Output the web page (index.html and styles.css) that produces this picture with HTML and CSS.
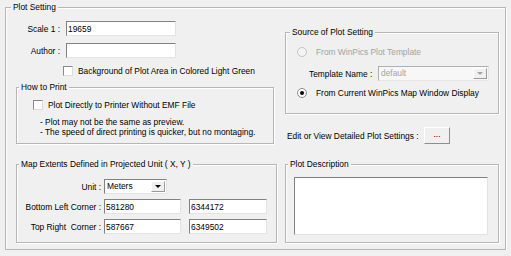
FILE: index.html
```html
<!DOCTYPE html>
<html lang="en">
<head>
    <meta charset="UTF-8">
    <meta name="viewport" content="width=device-width, initial-scale=1.0">
    <title>Plot Setting</title>
    <link rel="stylesheet" href="styles.css">
</head>
<body>
    <fieldset class="group main">
        <legend>Plot Setting</legend>
        <div class="layout">

            <!-- Left column -->
            <div class="col-left">
                <div class="field-row">
                    <label class="lbl" for="scale">Scale 1 :</label>
                    <input class="text wide" id="scale" type="text" value="19659">
                </div>
                <div class="field-row">
                    <label class="lbl" for="author">Author :</label>
                    <input class="text wide" id="author" type="text" value="">
                </div>
                <label class="check-row bg-check">
                    <input type="checkbox" class="check">
                    <span>Background of Plot Area in Colored Light Green</span>
                </label>

                <fieldset class="group print">
                    <legend>How to Print</legend>
                    <label class="check-row">
                        <input type="checkbox" class="check">
                        <span>Plot Directly to Printer Without EMF File</span>
                    </label>
                    <p class="note">- Plot may not be the same as preview.<br>- The speed of direct printing is quicker, but no montaging.</p>
                </fieldset>
            </div>

            <!-- Right column -->
            <div class="col-right">
                <fieldset class="group source">
                    <legend>Source of Plot Setting</legend>
                    <label class="radio-row disabled">
                        <input type="radio" name="source" class="radio" disabled>
                        <span>From WinPics Plot Template</span>
                    </label>
                    <div class="template-row">
                        <span class="tpl-lbl">Template Name :</span>
                        <div class="combo tpl disabled">
                            <span class="val">default</span>
                            <span class="drop"><span class="tri"></span></span>
                        </div>
                    </div>
                    <label class="radio-row">
                        <input type="radio" name="source" class="radio" checked>
                        <span>From Current WinPics Map Window Display</span>
                    </label>
                </fieldset>
                <div class="edit-row">
                    <span class="edit-lbl">Edit or View Detailed Plot Settings :</span>
                    <button class="btn" type="button">...</button>
                </div>
            </div>

            <fieldset class="group extents">
                <legend>Map Extents Defined in Projected Unit ( X, Y )</legend>
                <div class="ext-row">
                    <span class="ext-lbl">Unit :</span>
                    <div class="combo unit">
                        <span class="val">Meters</span>
                        <span class="drop"><span class="tri"></span></span>
                    </div>
                </div>
                <div class="ext-row">
                    <span class="ext-lbl">Bottom Left Corner :</span>
                    <input class="text coord" type="text" value="581280">
                    <input class="text coord" type="text" value="6344172">
                </div>
                <div class="ext-row">
                    <span class="ext-lbl">Top Right&nbsp; Corner :</span>
                    <input class="text coord" type="text" value="587667">
                    <input class="text coord" type="text" value="6349502">
                </div>
            </fieldset>

            <fieldset class="group desc">
                <legend>Plot Description</legend>
                <textarea class="desc-box"></textarea>
            </fieldset>

        </div>
    </fieldset>
</body>
</html>
```

FILE: styles.css
```css
/* General */
body {
    margin: 0;
    background-color: #f0f0f0;
    font-family: "Liberation Sans", Arial, sans-serif;
    font-size: 8.4px;
    line-height: 10px;
    color: #000;
}

/* Group boxes (etched look) */
.group {
    margin: 0;
    min-inline-size: 0;
    border: 1px solid #b6b6b6;
    box-shadow: 1px 1px 0 #fff, inset 1px 1px 0 #fff;
}

.group > legend {
    padding: 0 2px;
    line-height: 10px;
    background-color: #f0f0f0;
}

.main {
    width: 501px;
    box-sizing: border-box;
    margin: 2px 0 0 5px;
    padding: 9px 6px 6px 10px;
}

.main > legend {
    margin-left: -5px;
}

.layout {
    display: grid;
    grid-template-columns: 261px 214px;
    column-gap: 8px;
    row-gap: 15px;
}

/* Inputs */
.text {
    box-sizing: border-box;
    height: 15px;
    margin: 0;
    padding: 0 1px;
    border: 1px solid;
    border-color: #828282 #e3e3e3 #e3e3e3 #828282;
    background-color: #fff;
    font: inherit;
    color: #000;
    outline: none;
}

.check,
.radio {
    appearance: none;
    box-sizing: border-box;
    margin: 0;
    background-color: #fff;
}

.check {
    width: 10px;
    height: 10px;
    margin-right: 5px;
    border: 1px solid;
    border-color: #8a8a8a #dcdcdc #dcdcdc #8a8a8a;
}

.radio {
    width: 10px;
    height: 10px;
    margin-right: 9px;
    border: 1px solid #8a8a8a;
    border-radius: 50%;
    position: relative;
}

.radio:checked::after {
    content: "";
    position: absolute;
    left: 2px;
    top: 2px;
    width: 4px;
    height: 4px;
    border-radius: 50%;
    background-color: #000;
}

.radio:disabled {
    border-color: #c4c4c4;
    background-color: #f4f4f4;
}

/* Combo boxes */
.combo {
    box-sizing: border-box;
    display: flex;
    height: 15px;
    border: 1px solid;
    border-color: #828282 #e3e3e3 #e3e3e3 #828282;
    background-color: #fff;
}

.combo .val {
    flex: 1;
    padding-left: 2px;
    line-height: 13px;
}

.combo .drop {
    box-sizing: border-box;
    width: 14px;
    margin: 1px;
    display: flex;
    align-items: center;
    justify-content: center;
    background-color: #f0f0f0;
    border: 1px solid;
    border-color: #fff #9a9a9a #9a9a9a #fff;
}

.combo .tri {
    border-left: 3px solid transparent;
    border-right: 3px solid transparent;
    border-top: 3px solid #000;
}

.combo.disabled {
    background-color: #f7f7f7;
    border-color: #b0b0b0 #e6e6e6 #e6e6e6 #b0b0b0;
}

.combo.disabled .val {
    color: #a3a3a3;
}

.combo.disabled .tri {
    border-top-color: #a3a3a3;
}

/* Left column */
.col-left {
    display: flex;
    flex-direction: column;
}

.field-row {
    display: flex;
    align-items: center;
    height: 15px;
}

.field-row + .field-row {
    margin-top: 7px;
}

.field-row .lbl {
    width: 44px;
    margin-right: 6px;
    text-align: right;
}

.wide {
    width: 110px;
}

.check-row {
    display: flex;
    align-items: center;
    height: 12px;
}

.bg-check {
    margin: 7px 0 0 47px;
}

.print {
    width: 258px;
    box-sizing: border-box;
    margin-top: 5px;
    padding: 7px 4px 6px 16px;
}

.print > legend {
    margin-left: -14px;
}

.note {
    margin: 6px 0 0 7px;
}

/* Right column */
.col-right {
    display: flex;
    flex-direction: column;
}

.source {
    margin-top: 6px;
    padding: 9px 4px 14px 11px;
}

.source > legend {
    margin-left: -7px;
}

.radio-row {
    display: flex;
    align-items: center;
    height: 12px;
}

.radio-row.disabled {
    color: #a3a3a3;
}

.template-row {
    display: flex;
    align-items: center;
    margin: 8px 0 0 12px;
}

.tpl-lbl {
    width: 65px;
    margin-right: 4px;
}

.tpl {
    width: 111px;
}

.radio-row + .template-row + .radio-row {
    margin-top: 6px;
}

.edit-row {
    display: flex;
    align-items: center;
    margin: 13px 0 0 2px;
}

.edit-lbl {
    width: 137px;
}

.btn {
    box-sizing: border-box;
    width: 26px;
    height: 17px;
    margin: 0;
    padding: 0 0 3px;
    border: 1px solid;
    border-color: #fff #8e8e8e #8e8e8e #fff;
    background-color: #f0f0f0;
    font: inherit;
    color: #000;
}

/* Bottom boxes */
.extents {
    padding: 10px 4px 8px 4px;
}

.extents > legend {
    margin-left: -2px;
}

.ext-row {
    display: flex;
    align-items: center;
    height: 15px;
}

.ext-row + .ext-row {
    margin-top: 5px;
}

.ext-lbl {
    width: 80px;
    margin-right: 3px;
    text-align: right;
}

.unit {
    width: 63px;
}

.coord {
    width: 77px;
}

.coord + .coord {
    width: 78px;
    margin-left: 8px;
}

.desc {
    padding: 8px 0 7px 8px;
}

.desc > legend {
    margin-left: -6px;
}

.desc-box {
    display: block;
    box-sizing: border-box;
    width: 194px;
    height: 58px;
    margin: 0;
    padding: 0;
    resize: none;
    border: 1px solid;
    border-color: #828282 #e3e3e3 #e3e3e3 #828282;
    background-color: #fff;
    outline: none;
}
```
